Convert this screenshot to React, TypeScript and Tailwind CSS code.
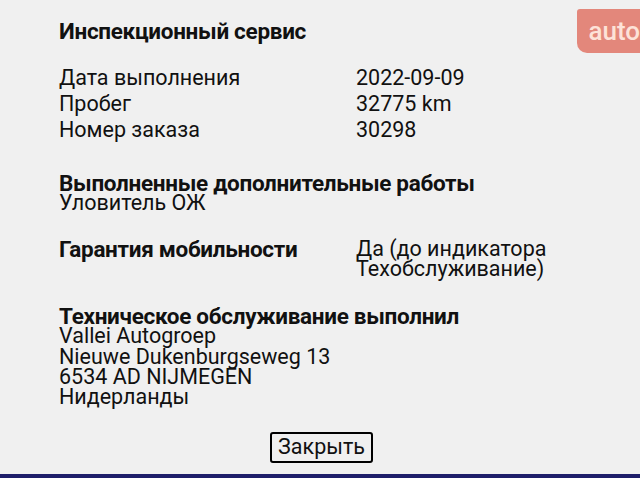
import React from 'react';

const rows = [
  ['Дата выполнения', '2022-09-09'],
  ['Пробег', '32775 km'],
  ['Номер заказа', '30298'],
];

export default function App() {
  return (
    <div
      className="relative w-[640px] h-[478px] overflow-hidden bg-[#f0f0f0] text-[#111] flex flex-col"
      style={{ fontFamily: 'Roboto, "Noto Sans", sans-serif' }}
    >
      {/* watermark badge */}
      <div className="absolute right-[-20px] top-[9px] h-[44px] pl-[11px] pr-[20px] flex items-center bg-[#e3877b] rounded-bl-[10px] rounded-tl-[3px] text-[#fde2d8] text-[26px] font-medium">
        auto
      </div>

      <div className="flex-1 pl-[59px] pt-[16px] text-[21.5px] leading-[20.3px]">
        <h1 className="font-bold text-[22.5px] leading-[30px] tracking-[-0.3px]">Инспекционный сервис</h1>

        <div className="mt-[19px] flex flex-col">
          {rows.map(([k, v]) => (
            <div key={k} className="flex h-[26px] items-center">
              <div className="w-[297px]">{k}</div>
              <div>{v}</div>
            </div>
          ))}
        </div>

        <div className="mt-[30px]">
          <div className="font-bold text-[22.5px] tracking-[-0.3px]">Выполненные дополнительные работы</div>
          <div>Уловитель ОЖ</div>
        </div>

        <div className="mt-[25px] flex">
          <div className="w-[297px] font-bold text-[22.5px] tracking-[-0.3px]">Гарантия мобильности</div>
          <div>
            <div>Да (до индикатора</div>
            <div>Техобслуживание)</div>
          </div>
        </div>

        <div className="mt-[27px]">
          <div className="font-bold text-[22.5px] tracking-[-0.3px]">Техническое обслуживание выполнил</div>
          <div>Vallei Autogroep</div>
          <div>Nieuwe Dukenburgseweg 13</div>
          <div>6534 AD NIJMEGEN</div>
          <div>Нидерланды</div>
        </div>

        <div className="mt-[24px] flex justify-center pr-[56px]">
          <button className="border-[2.5px] border-black rounded-[3px] px-[6px] h-[31px] text-[21.5px] leading-[20px] bg-[#f0f0f0]">
            Закрыть
          </button>
        </div>
      </div>

      <div className="h-[4px] bg-[#1e1e6a]" />
    </div>
  );
}
